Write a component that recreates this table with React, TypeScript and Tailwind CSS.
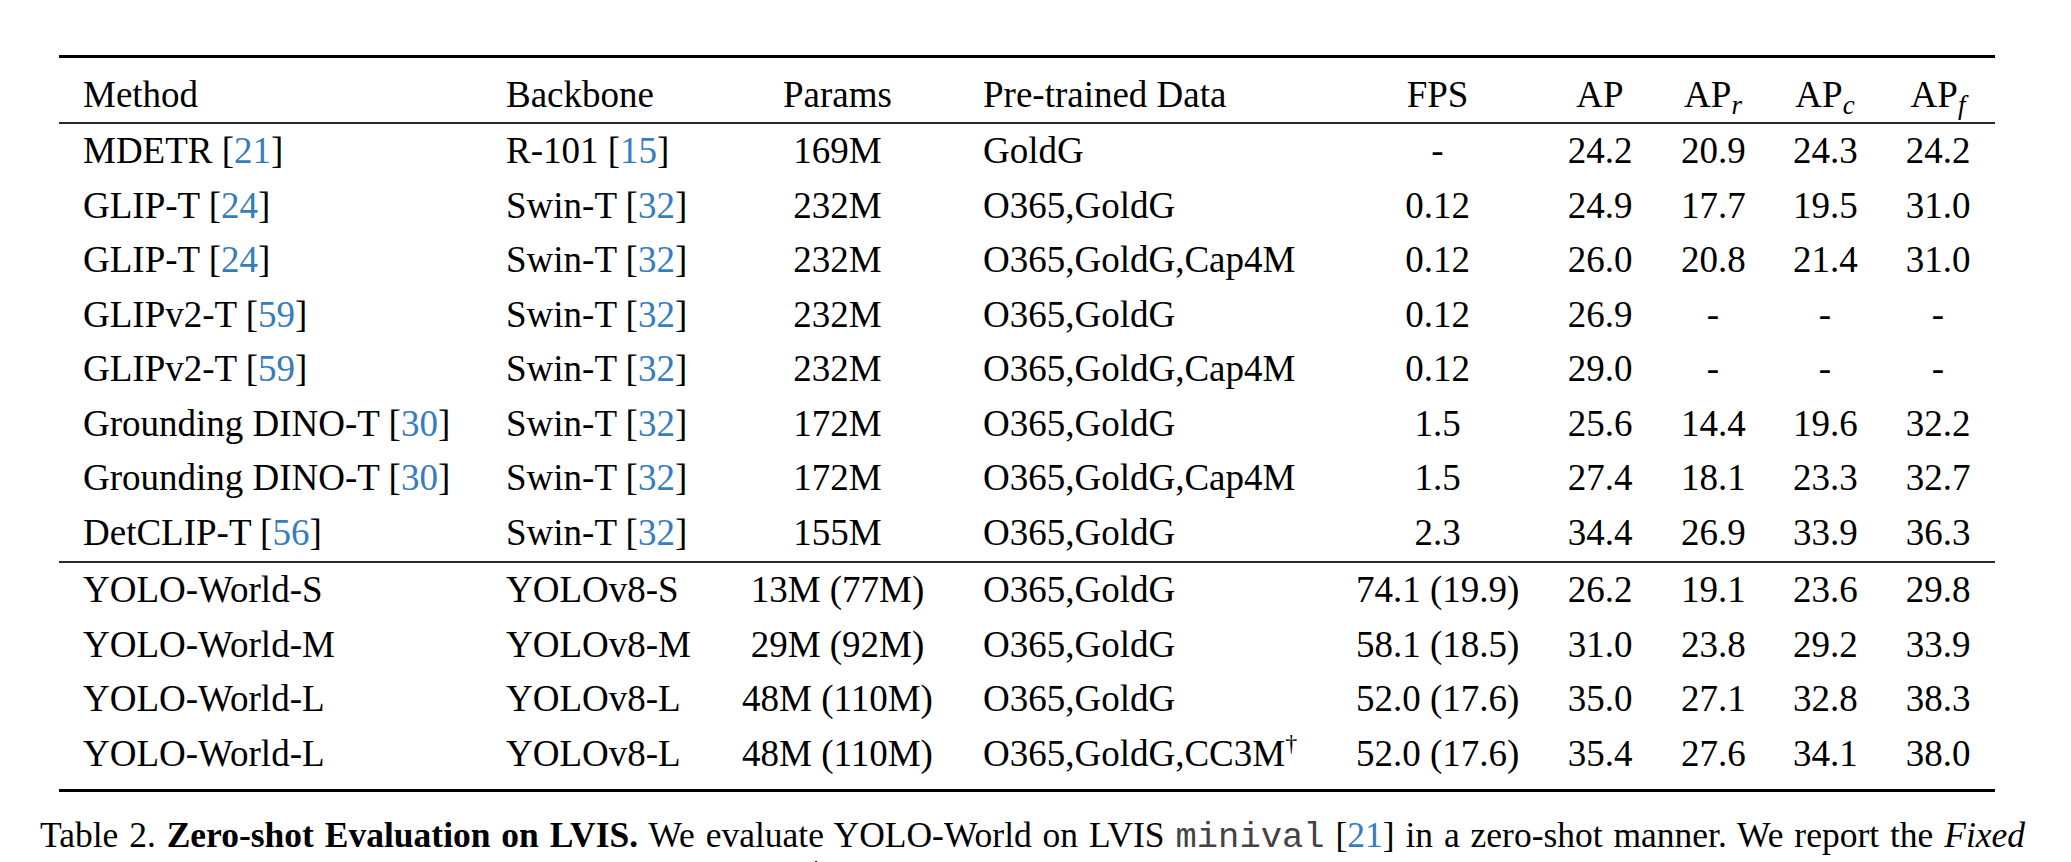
import React from "react";

const COLS =
  "grid grid-cols-[423px_234px_243px_373px_211px_114px_112px_112px_114px]";

const Cite = ({ n }: { n: string }) => (
  <span className="text-[#367dbd]">{n}</span>
);

type Cell = React.ReactNode;

const ALIGN = [
  "text-left",
  "text-left",
  "text-center",
  "text-left",
  "text-center",
  "text-center",
  "text-center",
  "text-center",
  "text-center",
];

function Row({ cells, extra }: { cells: Cell[]; extra?: string }) {
  return (
    <div className={`${COLS} ${extra ?? "h-[54.5px]"}`}>
      {cells.map((c, i) => (
        <div
          key={i}
          className={`px-[24px] whitespace-nowrap leading-[54.5px] ${ALIGN[i]}`}
        >
          {c}
        </div>
      ))}
    </div>
  );
}

const Sub = ({ s }: { s: string }) => (
  <span className="relative top-[7px] text-[27px] italic">{s}</span>
);

const c = (name: string, n: string) => (
  <>
    {name} [<Cite n={n} />]
  </>
);

const rowsA: Cell[][] = [
  [c("MDETR", "21"), c("R-101", "15"), "169M", "GoldG", "-", "24.2", "20.9", "24.3", "24.2"],
  [c("GLIP-T", "24"), c("Swin-T", "32"), "232M", "O365,GoldG", "0.12", "24.9", "17.7", "19.5", "31.0"],
  [c("GLIP-T", "24"), c("Swin-T", "32"), "232M", "O365,GoldG,Cap4M", "0.12", "26.0", "20.8", "21.4", "31.0"],
  [c("GLIPv2-T", "59"), c("Swin-T", "32"), "232M", "O365,GoldG", "0.12", "26.9", "-", "-", "-"],
  [c("GLIPv2-T", "59"), c("Swin-T", "32"), "232M", "O365,GoldG,Cap4M", "0.12", "29.0", "-", "-", "-"],
  [c("Grounding DINO-T", "30"), c("Swin-T", "32"), "172M", "O365,GoldG", "1.5", "25.6", "14.4", "19.6", "32.2"],
  [c("Grounding DINO-T", "30"), c("Swin-T", "32"), "172M", "O365,GoldG,Cap4M", "1.5", "27.4", "18.1", "23.3", "32.7"],
  [c("DetCLIP-T", "56"), c("Swin-T", "32"), "155M", "O365,GoldG", "2.3", "34.4", "26.9", "33.9", "36.3"],
];

const rowsB: Cell[][] = [
  ["YOLO-World-S", "YOLOv8-S", "13M (77M)", "O365,GoldG", "74.1 (19.9)", "26.2", "19.1", "23.6", "29.8"],
  ["YOLO-World-M", "YOLOv8-M", "29M (92M)", "O365,GoldG", "58.1 (18.5)", "31.0", "23.8", "29.2", "33.9"],
  ["YOLO-World-L", "YOLOv8-L", "48M (110M)", "O365,GoldG", "52.0 (17.6)", "35.0", "27.1", "32.8", "38.3"],
  [
    "YOLO-World-L",
    "YOLOv8-L",
    "48M (110M)",
    <>
      O365,GoldG,CC3M
      <span className="relative -top-[15px] text-[24px]">†</span>
    </>,
    "52.0 (17.6)",
    "35.4",
    "27.6",
    "34.1",
    "38.0",
  ],
];

const header: Cell[] = [
  "Method",
  "Backbone",
  "Params",
  "Pre-trained Data",
  "FPS",
  "AP",
  <>
    AP
    <Sub s="r" />
  </>,
  <>
    AP
    <Sub s="c" />
  </>,
  <>
    AP
    <Sub s="f" />
  </>,
];

export default function App() {
  return (
    <div className="w-[2071px] h-[862px] overflow-hidden bg-white text-black font-['Liberation_Serif','Times_New_Roman',serif]">
      <div className="pt-[55px] pl-[59px]">
        <div className="w-[1936px] text-[37px]">
          <div className="h-[3px] bg-black" />
          <Row cells={header} extra="h-[64px] pt-[10px]" />
          <div className="h-[2px] bg-[#2a2a2a]" />
          {rowsA.map((r, i) => (
            <Row key={i} cells={r} />
          ))}
          <div className="mt-[1px] h-[2px] bg-[#2a2a2a]" />
          {rowsB.map((r, i) => (
            <Row key={i} cells={r} />
          ))}
          <div className="mt-[7.5px] h-[3px] bg-black" />
        </div>
      </div>
      <div className="ml-[40px] mt-[21px] w-[1985px] text-[35.5px] leading-[44px]">
        <div className="text-justify [text-align-last:justify]">
          Table 2. <b>Zero-shot Evaluation on LVIS.</b> We evaluate YOLO-World on LVIS{" "}
          <span className="font-['Liberation_Mono',monospace] text-[#444]">minival</span> [
          <Cite n="21" />] in a zero-shot manner. We report the <i>Fixed</i>
        </div>
        <div className="whitespace-nowrap [word-spacing:6px]">
          <i>AP</i> [<Cite n="4" />] for a fair comparison with recent methods.{" "}
          <span className="relative -top-[16px] text-[25px]">†</span> denotes the pseudo labels of CC3M in our setting, which contains 246k samples.
        </div>
      </div>
    </div>
  );
}
